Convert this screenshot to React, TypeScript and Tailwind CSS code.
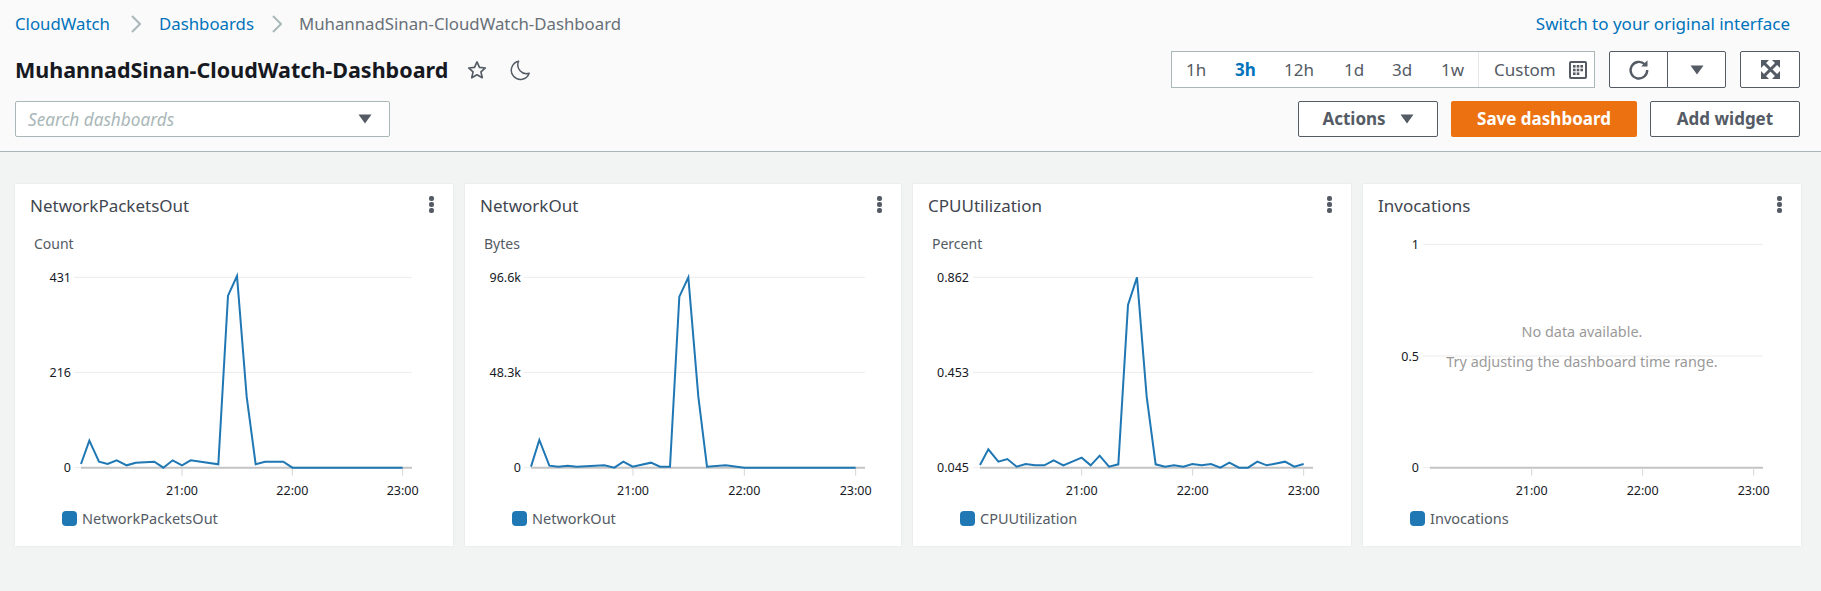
import React from "react";

const font = "font-['Noto_Sans','Open_Sans',sans-serif]";

type Chart = {
  title: string;
  unit?: string;
  offset: number;
  yLabels: { t: string; z: number }[];
  ticks: number[];
  axis: [number, number];
  gridStart: number;
  labelEnd: number;
  pts?: [number, number][];
  empty?: boolean;
};

const charts: Chart[] = [
  {
    title: "NetworkPacketsOut",
    unit: "Count",
    offset: 15,
    yLabels: [{ t: "431", z: 322 }, { t: "216", z: 607 }, { t: "0", z: 893 }],
    ticks: [546, 877, 1208],
    axis: [243, 1236],
    gridStart: 222,
    labelEnd: 213,
    pts: [[243,882],[268,812],[297,875],[323,882],[350,871],[380,886],[407,878],[463,875],[490,893],[518,871],[546,886],[572,871],[655,883],[684,377],[711,318],[740,680],[767,883],[795,875],[850,875],[877,893],[1208,893]],
  },
  {
    title: "NetworkOut",
    unit: "Bytes",
    offset: 5,
    yLabels: [{ t: "96.6k", z: 322 }, { t: "48.3k", z: 607 }, { t: "0", z: 893 }],
    ticks: [519, 853, 1187],
    axis: [213, 1215],
    gridStart: 192,
    labelEnd: 183,
    pts: [[213,890],[238,810],[268,887],[295,890],[323,887],[350,890],[433,886],[463,893],[490,875],[518,890],[573,878],[600,890],[630,890],[658,380],[685,322],[715,680],[741,890],[797,886],[853,893],[1187,893]],
  },
  {
    title: "CPUUtilization",
    unit: "Percent",
    offset: 8,
    yLabels: [{ t: "0.862", z: 322 }, { t: "0.453", z: 607 }, { t: "0.045", z: 893 }],
    ticks: [530, 863, 1196],
    axis: [225, 1224],
    gridStart: 204,
    labelEnd: 192,
    pts: [[225,885],[250,838],[280,875],[307,867],[335,890],[362,882],[390,886],[418,886],[446,871],[475,886],[530,863],[557,886],[584,857],[612,890],[640,883],[669,405],[696,322],[725,680],[752,883],[780,890],[807,886],[835,890],[862,882],[890,886],[918,882],[946,893],[973,878],[1002,893],[1029,893],[1057,875],[1085,886],[1140,875],[1168,890],[1196,882]],
  },
  {
    title: "Invocations",
    offset: 8,
    yLabels: [{ t: "1", z: 223 }, { t: "0.5", z: 558 }, { t: "0", z: 893 }],
    ticks: [530, 863, 1196],
    axis: [225, 1224],
    gridStart: 204,
    labelEnd: 192,
    empty: true,
  },
];

const Caret = ({ className = "" }: { className?: string }) => (
  <svg width="14" height="10" viewBox="0 0 14 10" className={className}>
    <path d="M0.5 0.5H13.5L7 9.5Z" fill="#545b64" />
  </svg>
);

function ChartSvg({ c }: { c: Chart }) {
  const X = (z: number) => z / 3 - c.offset;
  const Y = (z: number) => z / 3 - 64;
  return (
    <svg width="436" height="266" className="block overflow-visible font-['Noto_Sans',sans-serif]">
      {c.unit && (
        <text x={19} y={15} fontSize="14" fill="#545b64">
          {c.unit}
        </text>
      )}
      {c.yLabels.map((l, i) => (
        <g key={l.t}>
          {i < 2 && (
            <line x1={X(c.gridStart)} x2={X(c.axis[1])} y1={Y(l.z)} y2={Y(l.z)} stroke="#ececec" strokeWidth="1" />
          )}
          {i === 2 && (
            <>
              <line x1={X(c.gridStart)} x2={X(c.axis[0])} y1={Y(l.z)} y2={Y(l.z)} stroke="#ececec" strokeWidth="1" />
              <line x1={X(c.axis[0])} x2={X(c.axis[1])} y1={Y(l.z)} y2={Y(l.z)} stroke="#c4c4c4" strokeWidth="2" />
            </>
          )}
          <text x={X(c.labelEnd)} y={Y(l.z) + 4.5} fontSize="12.5" textAnchor="end" fill="#16191f">
            {l.t}
          </text>
        </g>
      ))}
      {c.ticks.map((t, i) => (
        <g key={t}>
          <line x1={X(t)} x2={X(t)} y1={Y(893)} y2={Y(893) + 8} stroke="#d5d5d5" strokeWidth="1" />
          <text x={X(t)} y={Y(893) + 27} fontSize="12.5" textAnchor="middle" fill="#16191f">
            {`${21 + i}:00`}
          </text>
        </g>
      ))}
      {c.pts && (
        <polyline
          points={c.pts.map(([x, y]) => `${X(x)},${Y(y)}`).join(" ")}
          fill="none"
          stroke="#1f77b4"
          strokeWidth="2"
          strokeLinejoin="miter"
        />
      )}
    </svg>
  );
}

function Card({ c }: { c: Chart }) {
  return (
    <div className="bg-white h-[362px] shadow-[0_0_2px_rgba(0,0,0,0.08)] flex flex-col relative">
      <div className="flex items-start justify-between h-[50px] pl-[15px] pr-[19px] pt-[10px]">
        <span className="text-[17px] leading-[24px] text-[#3f4650]">{c.title}</span>
        <span className="flex flex-col gap-[1px] mt-[2px]">
          <i className="block w-[5px] h-[5px] rounded-[2px] bg-[#545b64]" />
          <i className="block w-[5px] h-[5px] rounded-[2px] bg-[#545b64]" />
          <i className="block w-[5px] h-[5px] rounded-[2px] bg-[#545b64]" />
        </span>
      </div>
      <ChartSvg c={c} />
      <div className="flex items-center gap-[5px] pl-[47px] mt-[8px]">
        <span className="w-[15px] h-[15px] rounded-[4px] bg-[#1f77b4]" />
        <span className="text-[14.5px] leading-[20px] text-[#545b64]">{c.title}</span>
      </div>
      {c.empty && (
        <div className="absolute left-0 right-0 top-[136px] text-center text-[14.4px] text-[#9a9a9a]">
          <div className="h-[30px] leading-[24px]">No data available.</div>
          <div className="h-[30px] leading-[24px]">Try adjusting the dashboard time range.</div>
        </div>
      )}
    </div>
  );
}

const btn =
  "h-[36px] rounded-[2px] border border-[#545b64] bg-white text-[#545b64] font-bold text-[17px] flex items-center justify-center";

export default function App() {
  return (
    <div className={`${font} min-h-[591px] bg-[#f2f3f3]`}>
      <header className="bg-[#fafafa] border-b border-[#aab7b8] h-[152px] pl-[15px] pr-[21px] flex flex-col">
        <div className="flex items-center justify-between h-[47px] pr-[10px] text-[17px]">
          <nav className="flex items-center text-[16.8px]">
            <span className="text-[#0073bb] w-[96px]">CloudWatch</span>
            <svg width="14" height="20" viewBox="0 0 14 20" className="ml-[18px] mr-[16px]">
              <path d="M3 2l8 8-8 8" fill="none" stroke="#aab7b8" strokeWidth="2" />
            </svg>
            <span className="text-[#0073bb]">Dashboards</span>
            <svg width="14" height="20" viewBox="0 0 14 20" className="ml-[16px] mr-[15px]">
              <path d="M3 2l8 8-8 8" fill="none" stroke="#aab7b8" strokeWidth="2" />
            </svg>
            <span className="text-[#687078]">MuhannadSinan-CloudWatch-Dashboard</span>
          </nav>
          <span className="text-[#0073bb]">Switch to your original interface</span>
        </div>
        <div className="flex items-center justify-between h-[37px] mt-[4px]">
          <div className="flex items-center">
            <h1 className="text-[21.5px] font-bold text-[#16191f] leading-[30px]">MuhannadSinan-CloudWatch-Dashboard</h1>
            <svg width="22" height="22" viewBox="0 0 24 24" className="ml-[18px]">
              <path d="M12 3.2l2.7 5.9 6.4.7-4.8 4.3 1.4 6.4L12 17.2l-5.7 3.3 1.4-6.4-4.8-4.3 6.4-.7z" fill="none" stroke="#545b64" strokeWidth="1.8" strokeLinejoin="round" />
            </svg>
            <svg width="22" height="22" viewBox="0 0 24 24" className="ml-[21px]">
              <path d="M10.5 2.5A10 10 0 1 0 22 15.5 A 9.5 9.5 0 0 1 10.5 2.5Z" fill="none" stroke="#545b64" strokeWidth="1.6" strokeLinejoin="round" />
            </svg>
          </div>
          <div className="flex items-center">
            <div className="h-[37px] w-[424px] border border-[#aab7b8] bg-white flex items-center text-[17px] text-[#545b64] relative">
              <span className="absolute left-[14px]">1h</span>
              <span className="absolute left-[63px] font-bold text-[#0073bb]">3h</span>
              <span className="absolute left-[112px]">12h</span>
              <span className="absolute left-[172px]">1d</span>
              <span className="absolute left-[220px]">3d</span>
              <span className="absolute left-[269px]">1w</span>
              <span className="absolute left-[306px] top-0 bottom-0 border-l border-[#e5e8e8]" />
              <span className="absolute left-[322px]">Custom</span>
              <svg width="18" height="18" viewBox="0 0 18 18" className="absolute left-[397px]">
                <rect x="1" y="1" width="16" height="16" rx="1" fill="#fff" stroke="#545b64" strokeWidth="2" />
                <g fill="#545b64">
                  <rect x="4" y="4" width="2.6" height="2.6" />
                  <rect x="7.7" y="4" width="2.6" height="2.6" />
                  <rect x="11.4" y="4" width="2.6" height="2.6" />
                  <rect x="4" y="7.7" width="2.6" height="2.6" />
                  <rect x="7.7" y="7.7" width="2.6" height="2.6" />
                  <rect x="11.4" y="7.7" width="2.6" height="2.6" />
                  <rect x="4" y="11.4" width="2.6" height="2.6" />
                  <rect x="7.7" y="11.4" width="2.6" height="2.6" />
                </g>
              </svg>
            </div>
            <div className="flex ml-[14px] h-[37px]">
              <button className="w-[59px] h-[37px] rounded-l-[2px] border border-[#545b64] bg-white flex items-center justify-center">
                <svg width="22" height="22" viewBox="0 0 22 22">
                  <path d="M16.6 5.2A8.3 8.3 0 1 0 19.2 11" fill="none" stroke="#545b64" strokeWidth="2.4" />
                  <path d="M13.2 7.4h6.3V1.2z" fill="#545b64" />
                </svg>
              </button>
              <button className="w-[59px] h-[37px] -ml-px rounded-r-[2px] border border-[#545b64] bg-white flex items-center justify-center">
                <Caret />
              </button>
            </div>
            <button className="w-[60px] h-[37px] ml-[14px] rounded-[2px] border border-[#545b64] bg-white flex items-center justify-center">
              <svg width="19" height="19" viewBox="0 0 19 19">
                <g fill="#545b64">
                  <path d="M0 0h8L5.8 2.2 2.2 5.8 0 8z" />
                  <path d="M19 0h-8l2.2 2.2 3.6 3.6L19 8z" />
                  <path d="M0 19h8l-2.2-2.2-3.6-3.6L0 11z" />
                  <path d="M19 19h-8l2.2-2.2 3.6-3.6L19 11z" />
                </g>
                <path d="M3.5 3.5l12 12M15.5 3.5l-12 12" stroke="#545b64" strokeWidth="3" fill="none" />
              </svg>
            </button>
          </div>
        </div>
        <div className="flex items-center justify-between h-[36px] mt-[13px]">
          <div className="w-[375px] h-[36px] rounded-[2px] border border-[#aab7b8] bg-white flex items-center justify-between pl-[12px] pr-[17px]">
            <span className="italic text-[17.2px] text-[#aab7b8] translate-y-[1px]">Search dashboards</span>
            <Caret />
          </div>
          <div className="flex items-center gap-[13px]">
            <button className={`${btn} w-[140px]`}>
              Actions
              <Caret className="ml-[14px]" />
            </button>
            <button className="h-[36px] w-[186px] rounded-[2px] bg-[#ec7211] text-white font-bold text-[17px] flex items-center justify-center">
              Save dashboard
            </button>
            <button className={`${btn} w-[150px]`}>Add widget</button>
          </div>
        </div>
      </header>
      <main className="grid grid-cols-[438px_436px_438px_438px] gap-[12px] pl-[15px] pt-[32px]">
        {charts.map((c) => (
          <Card key={c.title} c={c} />
        ))}
      </main>
    </div>
  );
}
